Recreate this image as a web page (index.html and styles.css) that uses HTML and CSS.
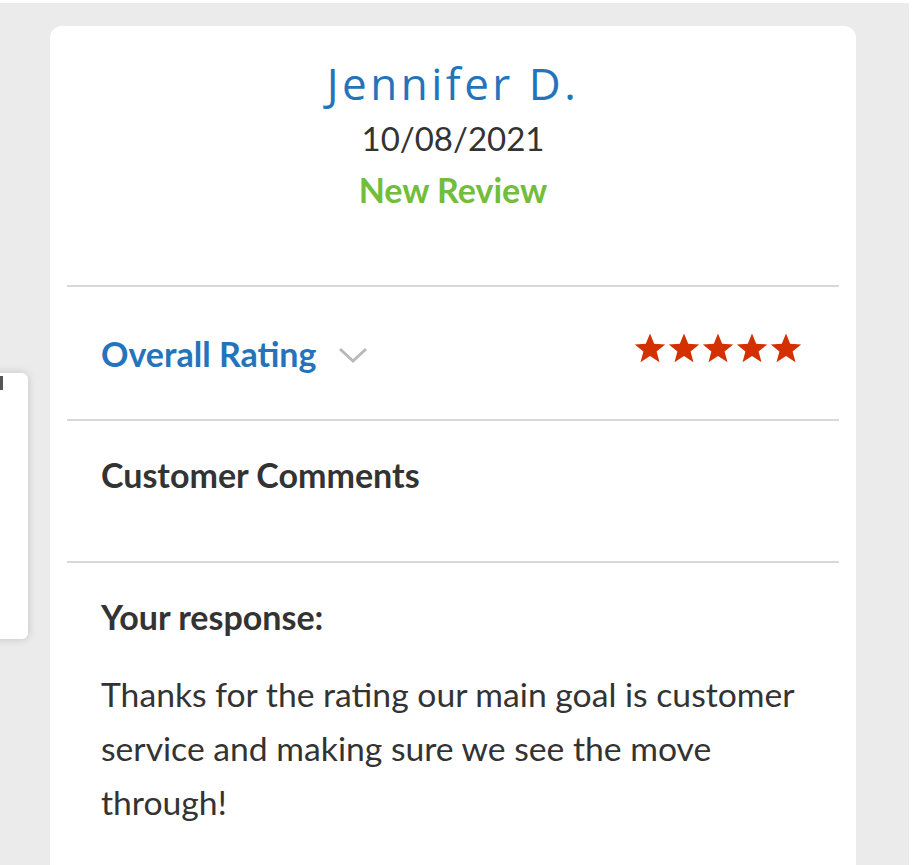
FILE: index.html
```html
<!DOCTYPE html>
<html lang="en">
<head>
<meta charset="utf-8">
<title>Review</title>
<link rel="stylesheet" href="styles.css">
</head>
<body>
<div class="page">
  <div class="side-panel"><span class="side-mark"></span></div>
  <main class="card">
    <header class="card-head">
      <h1 class="reviewer">Jennifer D.</h1>
      <div class="review-date">10/08/2021</div>
      <div class="review-status">New Review</div>
    </header>
    <section class="row rating-row">
      <div class="rating-label">
        <span>Overall Rating</span>
        <svg class="chevron" width="30" height="18" viewBox="0 0 30 18"><polyline points="2,3 15,15 28,3" fill="none" stroke="#b9b9b9" stroke-width="3"/></svg>
      </div>
      <div class="stars">
        <svg viewBox="0 0 34 32" width="34" height="32"><path d="M17 1.5l4.2 10.3 11 .6-8.6 7 2.9 10.8L17 24.1l-9.5 6.1 2.9-10.8-8.6-7 11-.6z" fill="#d33000"/></svg>
        <svg viewBox="0 0 34 32" width="34" height="32"><path d="M17 1.5l4.2 10.3 11 .6-8.6 7 2.9 10.8L17 24.1l-9.5 6.1 2.9-10.8-8.6-7 11-.6z" fill="#d33000"/></svg>
        <svg viewBox="0 0 34 32" width="34" height="32"><path d="M17 1.5l4.2 10.3 11 .6-8.6 7 2.9 10.8L17 24.1l-9.5 6.1 2.9-10.8-8.6-7 11-.6z" fill="#d33000"/></svg>
        <svg viewBox="0 0 34 32" width="34" height="32"><path d="M17 1.5l4.2 10.3 11 .6-8.6 7 2.9 10.8L17 24.1l-9.5 6.1 2.9-10.8-8.6-7 11-.6z" fill="#d33000"/></svg>
        <svg viewBox="0 0 34 32" width="34" height="32"><path d="M17 1.5l4.2 10.3 11 .6-8.6 7 2.9 10.8L17 24.1l-9.5 6.1 2.9-10.8-8.6-7 11-.6z" fill="#d33000"/></svg>
      </div>
    </section>
    <section class="row comments-row">
      <h2 class="section-title">Customer Comments</h2>
    </section>
    <section class="response">
      <h2 class="section-title">Your response:</h2>
      <p class="response-text">Thanks for the rating our main goal is customer service and making sure we see the move through!</p>
    </section>
  </main>
</div>
</body>
</html>
```

FILE: styles.css
```css
html, body {
  margin: 0;
  padding: 0;
  background: #ffffff;
}
body {
  font-family: Lato, "Open Sans", sans-serif;
  overflow: hidden;
}
.page {
  position: relative;
  margin-top: 3px;
  width: 909px;
  height: 862px;
  background: #ebebeb;
  padding-top: 23px;
  box-sizing: border-box;
  overflow: hidden;
}
.side-panel {
  position: absolute;
  left: -12px;
  top: 370px;
  width: 40px;
  height: 266px;
  background: #ffffff;
  border-radius: 6px;
  box-shadow: 0 0 8px rgba(0,0,0,0.18);
}
.side-mark {
  position: absolute;
  left: 12px;
  top: 3px;
  width: 3px;
  height: 14px;
  background: #555;
}
.card {
  margin-left: 50px;
  width: 806px;
  height: 900px;
  background: #ffffff;
  border-radius: 12px;
  padding: 0 17px;
  box-sizing: border-box;
}
.card-head {
  padding-top: 29px;
  padding-bottom: 70px;
  text-align: center;
  border-bottom: 2px solid #d8d8d8;
}
.reviewer {
  margin: 0;
  font-family: "Open Sans", sans-serif;
  font-weight: 400;
  font-size: 44px;
  line-height: 56px;
  letter-spacing: 3.5px;
  color: #2474bb;
}
.review-date {
  font-size: 33px;
  line-height: 54px;
  color: #333333;
}
.review-status {
  font-weight: 700;
  font-size: 34px;
  line-height: 50px;
  color: #72bd3c;
}
.row {
  border-bottom: 2px solid #d8d8d8;
  padding: 0 36px 0 34px;
}
.rating-row {
  height: 132px;
  display: flex;
  align-items: center;
  justify-content: space-between;
}
.rating-label {
  display: flex;
  align-items: center;
  gap: 21px;
  font-weight: 700;
  font-size: 34px;
  color: #2574bb;
}
.chevron {
  margin-top: 4px;
}
.stars {
  display: flex;
  gap: 0;
  margin-top: -10px;
}
.comments-row {
  padding-top: 34px;
  padding-bottom: 66px;
}
.section-title {
  margin: 0;
  font-weight: 700;
  font-size: 34px;
  line-height: 40px;
  color: #333333;
}
.response {
  padding: 34px 34px 0 34px;
}
.response-text {
  margin: 30px 0 0 0;
  font-size: 33.7px;
  line-height: 54px;
  color: #333333;
  max-width: 710px;
}
```
